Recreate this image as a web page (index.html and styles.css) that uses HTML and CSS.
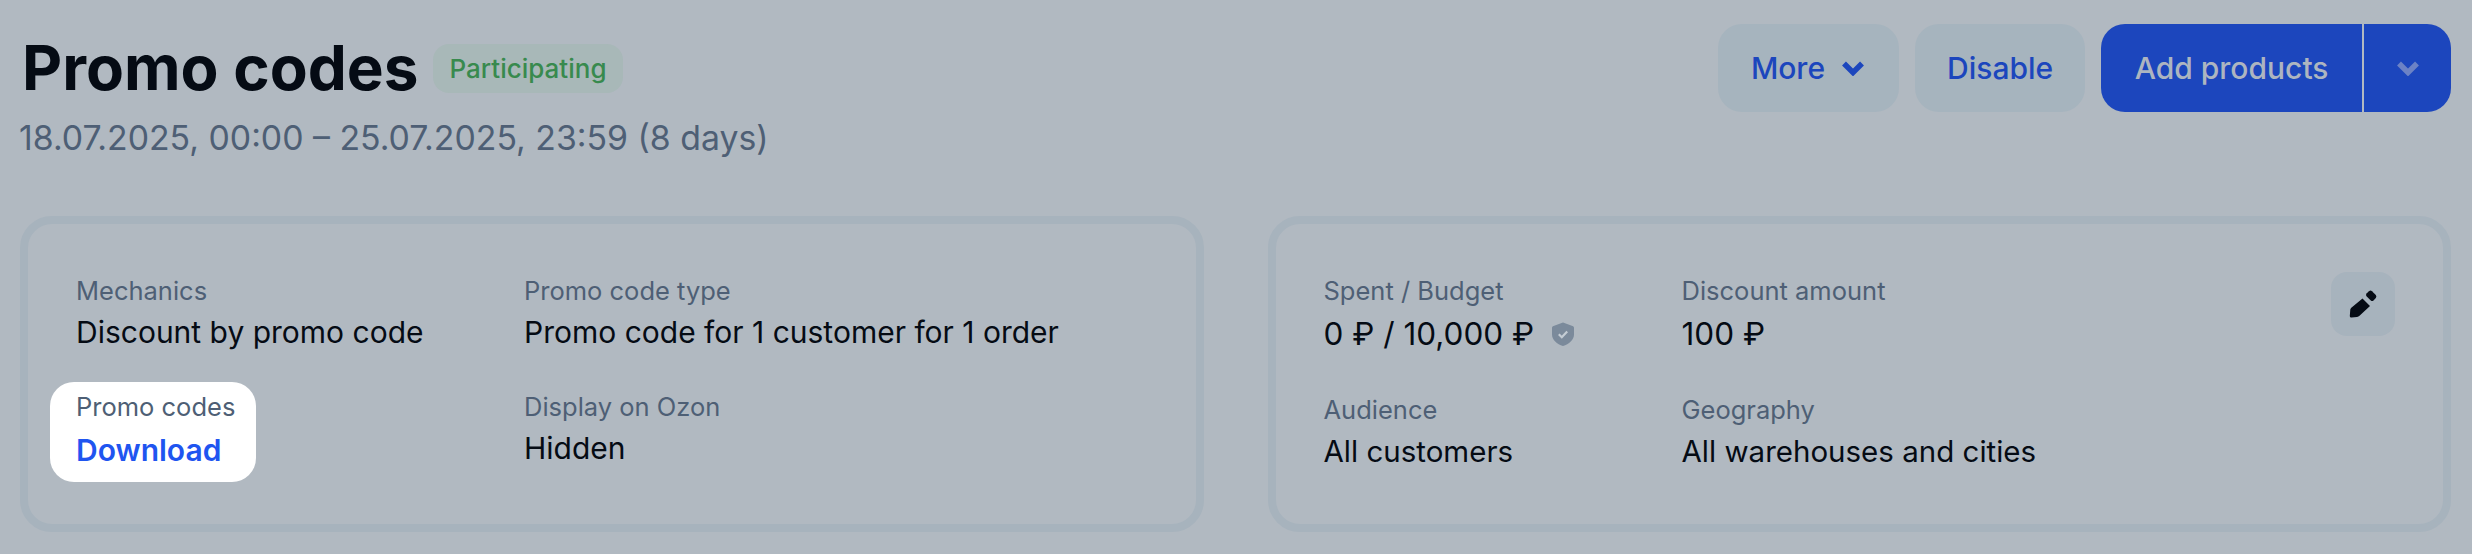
FILE: index.html

```html
<!DOCTYPE html>
<html lang="en">
<head>
  <meta charset="UTF-8" />
  <title>Promo codes</title>
  <meta name="viewport" content="width=device-width, initial-scale=1.0" />
  <link rel="stylesheet" href="styles.css">
</head>
<body>
  <div class="page">
    <header class="header">
      <div>
        <div class="title-row">
          <h1>Promo codes</h1>
          <span class="badge">Participating</span>
        </div>
        <p class="dates">18.07.2025, 00:00 – 25.07.2025, 23:59 (8 days)</p>
      </div>
      <div class="actions">
        <button class="btn btn-menu">More
          <svg class="chevron" viewBox="0 0 24 16"><path d="M3 3.500l9 9 9-9" /></svg>
        </button>
        <button class="btn">Disable</button>
        <div class="split">
          <button class="btn-primary">Add products</button>
          <button class="btn-primary btn-more">
            <svg class="chevron" viewBox="0 0 24 16"><path d="M3 3.500l9 9 9-9" /></svg>
          </button>
        </div>
      </div>
    </header>

    <div class="cards">
      <section class="card">
        <div class="fields fields-left">
          <div class="field">
            <div class="label">Mechanics</div>
            <div class="value">Discount by promo code</div>
          </div>
          <div class="field">
            <div class="label">Promo code type</div>
            <div class="value">Promo code for 1 customer for 1 order</div>
          </div>
          <div class="field highlight">
            <div class="label">Promo codes</div>
            <a class="link" href="#">Download</a>
          </div>
          <div class="field">
            <div class="label">Display on Ozon</div>
            <div class="value">Hidden</div>
          </div>
        </div>
      </section>

      <section class="card card-split">
        <div class="fields fields-right">
          <div class="field">
            <div class="label">Spent / Budget</div>
            <div class="value value-money">0 ₽ / 10,000 ₽
              <svg class="shield" viewBox="0 0 22 24">
                <path d="M11 .5l9.500 3.500c.9.300 1.500 1 1.500 2v6.500c0 5.500-5 9.500-11 11.500C5 22 0 18 0 12.500V6c0-1 .6-1.700 1.500-2z" fill="#7b8a9b" />
                <path d="M6.800 12.200l3 3 5.400-5.800" fill="none" stroke="#c4ccd4" stroke-width="2.200" />
              </svg>
            </div>
          </div>
          <div class="field">
            <div class="label">Discount amount</div>
            <div class="value value-money">100 ₽</div>
          </div>
          <div class="field">
            <div class="label">Audience</div>
            <div class="value">All customers</div>
          </div>
          <div class="field">
            <div class="label">Geography</div>
            <div class="value">All warehouses and cities</div>
          </div>
        </div>
        <button class="edit">
          <svg viewBox="0 0 32 32" width="32" height="32">
            <path d="M15.500 10.500L23 18 12.500 27.700Q11.500 28.800 10 29L4.500 29.500Q2.700 29.600 2.800 28L3.300 21.500Q3.400 20.600 4.300 19.700Z" fill="#050b14" />
            <path d="M19.500 5.500L22 3.200Q23.500 2 25 3.200L28.800 7Q30 8.500 28.800 10L26.500 12.500Q25 13.500 23.800 12.500L19.500 8.300Q18.500 7 19.500 5.500Z" fill="#050b14" />
          </svg>
        </button>
      </section>
    </div>
  </div>
</body>
</html>
```

FILE: styles.css

```css
body { background: #b1b9c1; color: #050b14; font-family: Inter, "Noto Sans", sans-serif; margin: 0; }
.page { padding: 24px 21px 0 20px; }

.header { display: flex; justify-content: space-between; align-items: flex-start; height: 192px; }
.title-row { display: flex; align-items: center; gap: 15px; padding-top: 10px; }
h1 { margin: 0 0 0 2px; font-size: 62px; line-height: 68px; font-weight: 700; }
.badge { background: #a8b8b8; color: #388a4e; font-size: 26px; font-weight: 500; line-height: 49px; padding: 0 16px; border-radius: 16px; }
.dates { margin: 14px 0 0 -1px; font-size: 33.800px; line-height: 44px; color: #4e5f75; }

.actions { display: flex; gap: 16px; }
.btn, .btn-primary { height: 88px; border: none; font-family: inherit; font-size: 30px; font-weight: 500; cursor: pointer; }
.btn { display: flex; align-items: center; gap: 16px; background: #a6b4be; color: #1c46bd; padding: 0 32px; border-radius: 24px; }
.btn-menu { padding: 0 34px 0 33px; }
.split { display: flex; gap: 2px; }
.btn-primary { background: #1c46bd; color: #adb5c0; padding: 0 33.500px; border-radius: 24px 0 0 24px; }
.btn-more { width: 87px; padding: 0; border-radius: 0 24px 24px 0; }
.chevron { display: block; width: 24px; height: 16px; fill: none; stroke: #1c46bd; stroke-width: 5.500; }
.btn-more .chevron { margin: 0 auto; stroke: #6c82c5; }

.cards { display: grid; grid-template-columns: 1fr 1fr; gap: 64px; }
.card { border: 8px solid #a7b3bd; border-radius: 32px; padding: 48px; height: 204px; }
.card-split { display: flex; justify-content: space-between; align-items: flex-start; }

.fields { display: grid; row-gap: 38px; padding-top: 2px; }
.fields-left { grid-template-columns: 448px 1fr; }
.fields-right { grid-template-columns: 358px 1fr; row-gap: 39px; }
.field { display: flex; flex-direction: column; gap: 4px; }
.label { font-size: 25.500px; line-height: 34px; color: #4e5f75; }
.value { font-size: 30px; line-height: 40px; }
.fields-right .value { font-size: 29.500px; }
.fields-right .value-money { display: flex; align-items: center; gap: 18px; margin-top: 2px; font-size: 31.500px; }
.shield { width: 22px; height: 24px; }

.highlight { justify-self: start; background: #fff; border-radius: 24px; margin: -8px 0 -14px -26px; padding: 8px 21px 12px 26px; }
.link { margin-top: 2px; color: #1f55f0; font-size: 30px; line-height: 40px; font-weight: 600; text-decoration: none; }

.edit { display: flex; align-items: center; justify-content: center; width: 64px; height: 64px; padding: 0; border: none; border-radius: 16px; background: #a7b3bd; cursor: pointer; }
```
